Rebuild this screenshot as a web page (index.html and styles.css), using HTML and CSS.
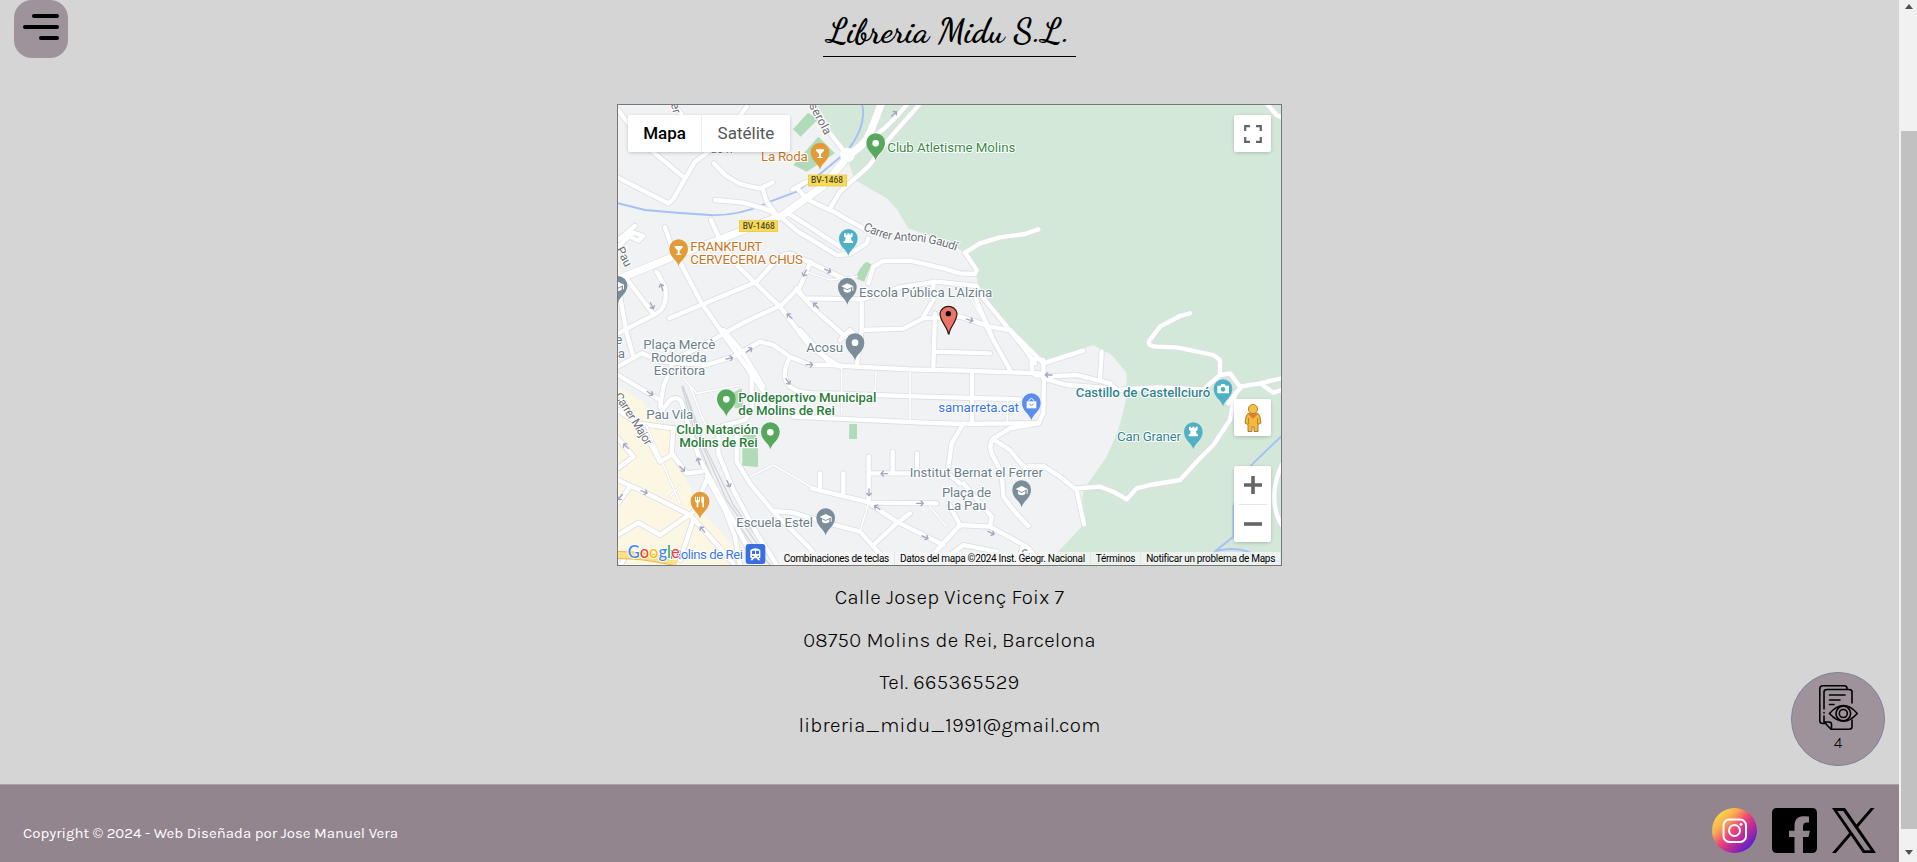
FILE: index.html
```
<!DOCTYPE html>
<html lang="es">
<head>
<meta charset="utf-8">
<title>Libreria Midu S.L.</title>
<link rel="stylesheet" href="styles.css">
</head>
<body>
<div class="viewport">
<div class="page">
  <header class="header">
    <button class="menu" aria-label="Menú"><span class="bar bar-a"></span><span class="bar bar-b"></span><span class="bar bar-c"></span></button>
    <h1 class="brand"><span>Libreria Midu S.L.</span></h1>
  </header>
  <main class="main">
    <section class="map">
      <svg class="map-art" viewBox="24 15 1989 1380" width="663" height="460">
        <defs>
          <path id="pin" d="M0 41C-4 22-28 14-28-12a28 28 0 0 1 56 0C28 14 4 22 0 41Z"/>
          <g id="cap" fill="#fff"><path d="M-18-14 0-23 18-14 0-5Z"/><path d="M-11-8V1Q0 9 11 1V-8L0-2Z"/><path d="M15-14h3V0h-3z"/></g>
          <path id="glass" fill="#fff" d="M-12-25H12V-21L3-11V-2H8V1H-8V-2H-3V-11L-12-21Z"/>
          <path id="tower" fill="#fff" d="M-13-27h6v4h4v-4h6v4h4v-4h6v10l-5 3 2 10h4v6h-28v-6h4l2-10-5-3Z"/>
          <path id="arrow" d="M-11 0H9M2-7 9 0 2 7"/>
          <g id="wide">
            <path d="M24 538 190 470 330 418 515 347 640 258 705 180"/>
            <path d="M705 170Q765 140 782 95L818 0"/>
          </g>
          <g id="mid">
            <path d="M658 328 690 275 775 200 830 125 940 0"/>
            <path d="M760 130Q830 90 890 15"/>
            <path d="M600 0 640 75 700 150"/>
            <path d="M590 298 680 340 760 385M560 262 590 298M548 268 590 245"/>
            <path d="M24 30 110 140 225 235M205 30 250 100 290 150 M24 233 175 310 188 300 255 185 330 130 410 20"/>
            <path d="M312 190 345 225 390 252 450 266 488 247M458 266 470 305 500 345"/>
            <path d="M315 300 400 308 470 328 512 350 560 392 680 465 720 462 770 430 775 415"/>
            <path d="M535 340 590 375 690 440"/>
            <path d="M165 382 185 440 275 610 380 760 500 930"/>
            <path d="M303 360 330 420 385 500 510 620 600 740 690 800"/>
            <path d="M24 420 75 378M24 440 70 398 100 408 85 422 60 410"/>
            <path d="M45 530 132 645M24 555 50 700 70 770"/>
            <path d="M140 515 165 560Q175 620 140 640L24 700"/>
            <path d="M178 655 440 545 510 468Q540 455 560 468L720 545"/>
            <path d="M602 485 570 560 515 615 400 668 290 730 200 775 150 780"/>
            <path d="M560 565 585 595 755 598 870 562 980 545 1100 558 1125 600 1235 735 1275 790"/>
            <path d="M560 570 610 625 740 740"/>
            <path d="M775 550 790 500 820 483 900 482 1000 505 1050 520 1095 522 1100 510 1065 458 1110 430 1170 412 1245 402 1285 388"/>
            <path d="M755 600 755 690M740 800 755 690 880 686 940 655 1050 650 1140 680 1195 690"/>
            <path d="M975 640 970 800M975 755 1140 760M970 545 970 600 940 650"/>
            <path d="M1125 670 1150 720 1200 810M1095 590 1150 720"/>
            <path d="M24 800 95 760 155 785 290 795 370 770 450 725 490 735 540 770 600 795 660 795 740 800 900 808 1060 812 1290 820 1302 835 1300 940 1285 970 1200 970 1060 972 940 968 550 950"/>
            <path d="M340 690 400 760 460 860M425 800 425 930 405 960 310 985"/>
            <path d="M538 775Q510 830 540 860 570 885 650 880L940 890 1230 898M1086 812 1086 970"/>
            <path d="M665 795 570 690M690 720 720 690 740 710"/>
            <path d="M150 920 160 860 195 770M24 825 150 900 155 925"/>
            <path d="M24 930 80 970 190 985M150 940 180 900Q215 880 220 930L270 1080 380 1280 440 1395"/>
            <path d="M190 985 185 1060 230 1120 275 1115M185 1065 150 1085 100 990"/>
            <path d="M380 985V1085L420 1150 490 1235 600 1345 640 1395M325 985V1060L370 1170 440 1300 500 1395"/>
            <path d="M24 1140 110 1180 240 1245 300 1310 370 1390M24 1210 60 1160M24 1015 70 1070 24 1105"/>
            <path d="M24 1305 85 1268 150 1305 250 1235 290 1140M250 1260 210 1380"/>
            <path d="M290 1130 345 1230 375 1310 390 1395"/>
            <path d="M490 1233 550 1238 620 1260 750 1295 840 1395M790 1335 860 1270 900 1240M605 1165 780 1208 980 1210M630 1170V1120M700 1185V1120M776 1205V1070M848 1120V1055M921 1120V1060M780 1120H900"/>
            <path d="M785 1215 860 1265 1000 1335M940 1395 1050 1275 1140 1280 1250 1340 1300 1395M1060 970 1025 1030 1012 1120 1050 1150M1015 1210 1050 1275M1145 1250 1140 1280M1060 1150 1145 1250M980 1395 1060 1335 1160 1355M1240 1335 1220 1395"/>
            <path d="M1285 970 1200 985 1150 1015Q1130 1040 1155 1080L1175 1120 1180 1190 1210 1230 1255 1278M1150 1018 1200 1050 1240 1100 1300 1098 1350 1130 1400 1170 1422 1273M1400 1165 1470 1160 1510 1175 1550 1198 1580 1165 1620 1155 1710 1140 1770 1075 1810 1035 1860 960 1875 880"/>
            <path d="M1740 640 1710 648 1650 680 1618 722Q1610 738 1640 740L1700 742 1810 765 1830 780 1830 825 1780 868 1640 862 1520 870 1500 850 1400 825 1300 830M1300 790 1420 752M1475 755 1470 840M1300 835 1370 855 1510 865M1830 825 1860 820 1890 860 1950 850 2015 835M1890 865 1855 910M1950 850 1990 878 2015 870"/>
            <path d="M1965 5 2000 45 2020 55M2015 1095Q1970 1200 2015 1275M1200 690 1300 790M1300 780Q1260 770 1265 800 1270 840 1300 820Z"/>
            <path d="M30 1400 50 1360"/>
          </g>
          <g id="thin">
            <path d="M590 515 660 540 740 530M610 490 720 540"/>
            <path d="M695 805V940M798 815 795 880M900 818V960M1192 895V970"/>
            <path d="M220 835 260 880 395 855M240 860 280 960 310 1010M420 1130 490 1095 610 1165M775 1210 750 1295M110 980 210 1210M180 1190 210 1160M960 1220 1010 1280M1120 660 1080 590"/>
          </g>
        </defs>
        <rect x="24" y="15" width="1989" height="1380" fill="#f1f2f4"/>
        <path fill="#d3e8d8" d="M620 15 665 90 702 150 735 240 830 295 862 330 895 385 1010 425 1065 458 1100 530 1110 580 1215 710 1265 785 1300 780 1450 735 1505 765 1550 818 1548 900 1525 990 1490 1070 1435 1150 1418 1180 1415 1280 1335 1365 1300 1395H2013V15Z"/>
        <path fill="#fcf7e3" d="M24 860 100 905 130 950 180 990 185 1065 240 1160 275 1240 330 1290 370 1340 395 1395H24ZM24 490 38 530 24 538Z"/>
        <path fill="#b1dab8" d="m549 88 45-50 30 20-52 52ZM550 195l75-85 50 50-85 55ZM737 535q8-30 32-50l18 10q-15 20-24 50ZM365 880l30-15 5 60-25 0ZM397 1045h47v56l-47-4ZM398 1005h40v20h-40ZM718 972h23v45h-24Z"/>
        <path class="river" d="M24 310 105 330 200 338 310 346Q400 345 480 305L560 275 630 222 710 155Q770 80 757 15M2013 1010 1950 1070 1900 1120 1870 1220 1870 1310 1820 1350 1780 1395M1820 1352Q1900 1335 1950 1375L2013 1385"/>
        <path class="rail" d="M220 860 270 1020 350 1200 440 1330 500 1395M216 860 260 1020 340 1210 425 1330 480 1395M228 880 285 1040 370 1215 460 1340 520 1410"/>
        <g class="case"><use href="#wide" class="w22"/><use href="#mid" class="w15"/><use href="#thin" class="w8"/></g>
        <g class="road"><use href="#thin" class="w5"/><use href="#mid" class="w12"/><use href="#wide" class="w19"/></g>
        <circle cx="712" cy="165" r="22" fill="#fff"/>
        <path d="M24 1365Q110 1365 200 1388" fill="none" stroke="#efb83e" stroke-width="24"/>
        <path d="M24 1365Q110 1365 200 1388" fill="none" stroke="#fbe08a" stroke-width="18"/>
        <g class="arrows">
          <use href="#arrow" transform="translate(853 41) rotate(-42)"/><use href="#arrow" transform="translate(584 520) rotate(115)"/><use href="#arrow" transform="translate(654 512) rotate(25)"/><use href="#arrow" transform="translate(617 616) rotate(-135)"/><use href="#arrow" transform="translate(538 648) rotate(-135)"/><use href="#arrow" transform="translate(155 561) rotate(-110)"/><use href="#arrow" transform="translate(126 618) rotate(65)"/><use href="#arrow" transform="translate(1080 660) rotate(15)"/><use href="#arrow" transform="translate(418 750) rotate(-35)"/><use href="#arrow" transform="translate(359 775) rotate(-10)"/><use href="#arrow" transform="translate(599 794)"/><use href="#arrow" transform="translate(534 845) rotate(55)"/><use href="#arrow" transform="translate(121 880) rotate(30)"/><use href="#arrow" transform="translate(47 1038) rotate(-135)"/><use href="#arrow" transform="translate(217 1107) rotate(45)"/><use href="#arrow" transform="translate(266 1083) rotate(-105)"/><use href="#arrow" transform="translate(356 1152) rotate(65)"/><use href="#arrow" transform="translate(103 1176) rotate(20)"/><use href="#arrow" transform="translate(30 1192) rotate(130)"/><use href="#arrow" transform="translate(277 1288) rotate(-130)"/><use href="#arrow" transform="translate(822 1121) rotate(180)"/><use href="#arrow" transform="translate(777 1178) rotate(90)"/><use href="#arrow" transform="translate(931 1210)"/><use href="#arrow" transform="translate(801 1222) rotate(-145)"/><use href="#arrow" transform="translate(946 1312) rotate(25)"/><use href="#arrow" transform="translate(1144 1299) rotate(25)"/><use href="#arrow" transform="translate(1315 825) rotate(180)"/>
        </g>
        <g class="street">
          <path id="gaudi" fill="none" d="M758 388Q830 427 895 422 975 427 1050 457"/>
          <path id="major" fill="none" d="M12 888Q60 960 112 1046"/>
          <text textLength="290"><textPath href="#gaudi">Carrer Antoni Gaudí</textPath></text>
          <text textLength="178"><textPath href="#major">Carrer Major</textPath></text>
          <text transform="translate(592 8) rotate(62)" textLength="112">iserola</text>
          <text transform="translate(182 12) rotate(75)">er</text>
          <text transform="translate(18 448) rotate(63)">Pau</text>
          <text x="300" y="160">de n</text>
          <text transform="translate(1245 1378) rotate(-35)">C</text>
        </g>
        <g class="shield"><rect x="595" y="225" width="115" height="33"/><rect x="388" y="362" width="115" height="33"/><text x="603" y="250" textLength="96">BV-1468</text><text x="398" y="387" textLength="96">BV-1468</text></g>
        <g class="poi" transform="translate(-1 -1)">
          <g fill="#c9761f"><text x="454" y="185" textLength="140">La Roda</text><text x="242" y="455" textLength="216">FRANKFURT</text><text x="242" y="494" textLength="338">CERVECERIA CHUS</text></g>
          <g fill="#3a8a49"><text x="833" y="157" textLength="384">Club Atletisme Molins</text></g>
          <g fill="#2c7d3b" class="strong"><text x="386" y="906" textLength="414">Polideportivo Municipal</text><text x="386" y="945" textLength="290">de Molins de Rei</text><text x="200" y="1004" textLength="246">Club Natación</text><text x="209" y="1043" textLength="235">Molins de Rei</text></g>
          <g fill="#6c7f8b"><text x="748" y="591" textLength="400">Escola Pública L'Alzina</text><text x="590" y="756" textLength="110">Acosu</text><text x="101" y="748" textLength="216">Plaça Mercè</text><text x="124" y="787" textLength="167">Rodoreda</text><text x="132" y="826" textLength="155">Escritora</text><text x="110" y="958" textLength="141">Pau Vila</text><text x="380" y="1281" textLength="230">Escuela Estel</text><text x="900" y="1131" textLength="400">Institut Bernat el Ferrer</text><text x="997" y="1191" textLength="147">Plaça de</text><text x="1012" y="1230" textLength="118">La Pau</text><text x="17" y="734">e</text><text x="24" y="774">a</text></g>
          <g fill="#3b76e8"><text x="986" y="936" textLength="242">samarreta.cat</text><text x="180" y="1377" textLength="220">Molins de Rei</text></g>
          <g fill="#31848f"><text x="1398" y="893" textLength="404" class="strong">Castillo de Castellciuró</text><text x="1522" y="1023" textLength="192">Can Graner</text></g>
        </g>
        <g class="pins">
          <g fill="#e39b38"><use href="#pin" x="630" y="168"/><use href="#pin" x="206" y="458"/><use href="#pin" x="270" y="1215"/></g>
          <g fill="#57a75c"><use href="#pin" x="797" y="140"/><use href="#pin" x="349" y="908"/><use href="#pin" x="481" y="1007"/></g>
          <g fill="#4fb0c6"><use href="#pin" x="715" y="427"/><use href="#pin" x="1750" y="1007"/><use href="#pin" x="1839" y="878"/></g>
          <g fill="#7a8d99"><use href="#pin" x="712" y="573"/><use href="#pin" x="24" y="568"/><use href="#pin" x="735" y="740"/><use href="#pin" x="647" y="1265"/><use href="#pin" x="1235" y="1181"/></g>
          <use href="#pin" x="1264" y="920" fill="#5b8def"/>
          <use href="#glass" x="630" y="173"/><use href="#glass" x="206" y="463"/>
          <use href="#tower" x="715" y="427"/><use href="#tower" x="1750" y="1007"/>
          <use href="#cap" x="712" y="573"/><use href="#cap" x="24" y="568"/><use href="#cap" x="647" y="1265"/><use href="#cap" x="1235" y="1181"/>
          <g fill="#fff"><circle cx="797" cy="130" r="10"/><circle cx="349" cy="898" r="10"/><circle cx="481" cy="997" r="10"/><circle cx="735" cy="728" r="10"/>
          <path d="M1822 857h9l4-5h8l4 5h10v23h-35Z"/><path d="M1250 904h29v21h-29Z"/><path d="M255 1190h3v10h3v-10h3v10h3v-10h3v12q0 5-5 6v14h-5v-14q-5-1-5-6ZM274 1190h8v32h-5v-14h-3Z"/></g>
          <circle cx="1839" cy="868" r="7" fill="#4fb0c6"/>
          <path d="M1257 904v-3q7-11 14 0v3" fill="none" stroke="#fff" stroke-width="3"/><path d="M1258 911q6 10 13 0" fill="none" stroke="#5b8def" stroke-width="3"/>
          <rect x="407" y="1332" width="59" height="60" rx="9" fill="#3b6fe0"/><path d="M421 1350q15-10 30 0v24h-5l5 7h-7l-4-6h-8l-4 6h-7l5-7h-5Z" fill="#fff"/><path d="M426 1352h9v10h-9Zm12 0h9v10h-9ZM426 1367h5v4h-5Zm16 0h5v4h-5Z" fill="#3b6fe0"/>
        </g>
        <path d="M1015 702C1013 680 990 666 990 640A26 26 0 0 1 1041 640C1041 666 1019 680 1017 702Z" fill="#ea7467" stroke="#2b1512" stroke-width="3.5"/><circle cx="1015" cy="641" r="8"/>
        <g class="google"><text x="53" y="1374" textLength="156" lengthAdjust="spacingAndGlyphs"><tspan fill="#4285f4">G</tspan><tspan fill="#ea4335">o</tspan><tspan fill="#fbbc04">o</tspan><tspan fill="#4285f4">g</tspan><tspan fill="#34a853">l</tspan><tspan fill="#ea4335">e</tspan></text></g>
      </svg>
      <div class="types"><button class="type active">Mapa</button><button class="type">Satélite</button></div>
      <button class="ctl full" aria-label="Pantalla completa"><svg width="18" height="18" viewBox="0 0 18 18"><path d="M1.2 6V1.2H6M12 1.2h4.8V6M16.800 12v4.800H12M6 16.800H1.200V12" fill="none" stroke="#666" stroke-width="2.200"/></svg></button>
      <button class="ctl pegman" aria-label="Street View"><svg width="18" height="30" viewBox="0 0 18 30"><path d="M5 10h8q2.500 1 3 4l1 6-3 1.500V28.500H10V24H8v4.500H4V21.500L1 20l1-6q.5-3 3-4Z" fill="#f5b83d" stroke="#9b742c" stroke-width=".9"/><path d="m4 11 5 5 5-5Z" fill="#e07f35"/><circle cx="9" cy="6" r="4.600" fill="#f9bf42" stroke="#ad8335"/><path d="M4.500 15v6m9-6v6" stroke="#b8872e" fill="none"/></svg></button>
      <div class="zoom"><button class="zbtn" aria-label="Acercar"><svg width="18" height="18"><path d="M9 0v18M0 9h18" stroke="#666" stroke-width="3.600"/></svg></button><i class="zline"></i><button class="zbtn" aria-label="Alejar"><svg width="18" height="18"><path d="M0 10h18" stroke="#666" stroke-width="3.600"/></svg></button></div>
      <div class="legal"><span>Combinaciones de teclas</span><span>Datos del mapa ©2024 Inst. Geogr. Nacional</span><span>Términos</span><span>Notificar un problema de Maps</span></div>
    </section>
    <address class="contact"><p>Calle Josep Vicenç Foix 7</p><p>08750 Molins de Rei, Barcelona</p><p>Tel. 665365529</p><p>libreria_midu_1991@gmail.com</p></address>
  </main>
  <footer class="footer">
    <p class="copy">Copyright © 2024 - Web Diseñada por Jose Manuel Vera</p>
    <div class="social">
      <svg width="45" height="45" viewBox="0 0 45 45"><defs><linearGradient id="ig" x1="0.100" y1="0.100" x2="0.900" y2="0.900"><stop offset="0" stop-color="#f9e04b"/><stop offset=".25" stop-color="#f9ae50"/><stop offset=".48" stop-color="#ee4676"/><stop offset=".7" stop-color="#b62a9c"/><stop offset=".95" stop-color="#5a1fce"/></linearGradient></defs><circle cx="22.500" cy="22.500" r="22.500" fill="url(#ig)"/><rect x="11.500" y="11.500" width="22.500" height="22.500" rx="6" fill="none" stroke="#fff" stroke-width="2"/><circle cx="22.500" cy="22.500" r="5.500" fill="none" stroke="#fff" stroke-width="2"/><circle cx="29" cy="16.300" r="1.500" fill="#fff"/></svg>
      <svg width="45" height="45" viewBox="0 0 45 45"><path d="M5 0H40Q45 0 45 5V40Q45 45 40 45H31V29H36.500L38 22.700H31V18.500Q31 14.500 35 14.500H37V8.500Q34 8 31 8.200C25 8.500 22.500 12 22.500 18V22.700H17V29H22.500V45H5Q0 45 0 40V5Q0 0 5 0Z"/></svg>
      <svg width="44" height="45" viewBox="0 0 1200 1227" preserveAspectRatio="none"><path d="M714.163 519.284 1160.890 0h-105.860L667.137 450.887 357.328 0H0l468.492 681.821L0 1226.370h105.866l409.625-476.152 327.181 476.152H1200L714.137 519.284h.026ZM569.165 687.828l-47.468-67.894-377.686-540.240h162.604l304.797 435.991 47.468 67.894 396.200 566.721H892.476L569.165 687.854v-.026Z"/></svg>
    </div>
  </footer>
  <a class="visits"><svg width="39" height="45" viewBox="0 0 39 45" fill="none" stroke="#000" stroke-width="1.600" stroke-linecap="round" stroke-linejoin="round"><path d="M28 3.500Q28 .8 25.500.8H4Q.8.800.800 4V36Q.800 38.500 4 38.500H7M5 24V7Q5 4.500 8 4.500H30Q33 4.500 33 7V18M5 27.500v.5M5 31v6l7 7.200H30q3 0 3-2.500V35M5.500 37H10q2.500 0 2.500 2.500V44M10.500 10H26M10.500 15H21M10.500 19.500H15"/><path d="M10.500 28.500Q24.500 12.500 38.300 28.500 24.500 44 10.500 28.500Z"/><circle cx="24.300" cy="28.500" r="7.300"/><circle cx="24.300" cy="28.500" r="4"/></svg><span>4</span></a>
</div>
<div class="scrollbar"><i class="up"></i><i class="thumb"></i><i class="down"></i></div>
</div>
</body>
</html>
```
FILE: styles.css
```
* { box-sizing: border-box; margin: 0; }
body { background: #d5d5d5; font-family: Karla, Roboto, sans-serif; color: #000; overflow: hidden; }
button { border: 0; padding: 0; background: none; font: inherit; }
svg { display: block; }
.viewport { display: grid; grid-template-columns: 1899px 18px; height: 862px; }
.page { position: relative; display: grid; grid-template-rows: 104px 680px 78px; }
.header { display: flex; justify-content: center; }
.menu { position: absolute; left: 14px; top: 0; width: 54px; height: 58px; border-radius: 18px; background: #9f939b; display: flex; flex-direction: column; align-items: flex-end; gap: 7px; padding: 14px 9px 0 0; }
.bar { height: 4px; border-radius: 2px; background: #000; }
.bar-a { width: 27px; }
.bar-b { width: 36px; }
.bar-c { width: 20px; }
.brand { width: 253px; height: 57px; border-bottom: 1px solid #000; padding: 12px 0 0 4px; font: 700 34px/40px "Dancing Script", "Liberation Serif", cursive; white-space: nowrap; }
.main { display: flex; flex-direction: column; align-items: center; }
.map { position: relative; width: 665px; height: 462px; border: 1px solid #777; overflow: hidden; font-family: Roboto, sans-serif; }
.map-art { font-family: Roboto, sans-serif; }
.case, .road, .river, .rail, .arrows { fill: none; stroke-linecap: round; stroke-linejoin: round; }
.case { stroke: #dcdfe5; }
.road { stroke: #fff; }
.w22 { stroke-width: 26px; }
.w19 { stroke-width: 22px; }
.w15 { stroke-width: 18px; }
.w12 { stroke-width: 13px; }
.w8 { stroke-width: 8px; }
.w5 { stroke-width: 5px; }
.river { stroke: #a5c1f7; stroke-width: 6px; }
.rail { stroke: #d1d4d9; stroke-width: 4px; }
.arrows { stroke: #a2a6c2; stroke-width: 4px; }
.street { font-size: 36px; fill: #6b6e73; }
.street text, .poi text { stroke: #fff; stroke-width: 6px; stroke-linejoin: round; paint-order: stroke; }
.poi { font-size: 40px; }
.strong { font-weight: 500; }
.pins use { stroke: none; }
.shield rect { fill: #f6da58; stroke: #e8c53d; stroke-width: 2px; }
.shield text { font-size: 25px; font-weight: 500; fill: #4e4a2b; }
.google text { font: 500 53px Lato, sans-serif; stroke: #fff; stroke-width: 5px; paint-order: stroke; }
.types { position: absolute; left: 10px; top: 10px; height: 37px; display: grid; grid-template-columns: 74px 88px; background: #fff; border-radius: 2px; box-shadow: 0 1px 4px -1px rgba(0,0,0,.3); }
.type { font-size: 17px; color: #565656; padding-bottom: 2px; }
.type.active { color: #000; font-weight: 500; border-right: 1px solid #eee; }
.ctl, .zoom { position: absolute; right: 10px; width: 37px; background: #fff; border-radius: 2px; box-shadow: 0 1px 4px -1px rgba(0,0,0,.3); }
.ctl { height: 37px; display: grid; place-items: center; }
.full { top: 10px; }
.pegman { top: 294px; }
.zoom { top: 361px; height: 76px; display: flex; flex-direction: column; align-items: center; }
.zbtn { height: 38px; display: grid; place-items: center; }
.zline { width: 28px; height: 1px; background: #e6e6e6; }
.legal { position: absolute; right: 0; bottom: 0; height: 13px; display: flex; font-size: 10px; line-height: 13px; letter-spacing: -.3px; white-space: nowrap; color: #000; }
.legal span { background: rgba(245,245,245,.75); padding: 0 5px; border-right: 1px solid #dfe9e2; }
.contact { font-style: normal; font-size: 20.600px; font-weight: 350; letter-spacing: .27px; line-height: 24px; width: 340px; padding-top: 19px; display: grid; grid-auto-rows: 42.7px; text-align: center; white-space: nowrap; }
.footer { background: #93858d; border-top: 1px solid #aaa2a7; display: flex; justify-content: space-between; padding: 23px 23px 0 23px; }
.copy { color: #fff; font-size: 15px; font-weight: 450; line-height: 20px; padding-top: 15px; }
.social { display: flex; gap: 15px; }
.visits { position: absolute; left: 1791px; top: 672px; width: 94px; height: 94px; border: 1px solid #7c819b; border-radius: 50%; background: #9f939b; display: flex; flex-direction: column; align-items: center; padding-top: 12px; gap: 4px; font-size: 16px; font-weight: 300; line-height: 18px; }
.scrollbar { background: #f1f1f1; padding-left: 2px; display: grid; grid-template-rows: 131px 698px 33px; justify-items: center; }
.thumb { width: 16px; background: #c1c1c1; }
.up, .down { width: 0; height: 0; border: 4px solid transparent; }
.up { border-bottom: 5px solid #505050; border-top: 0; margin-top: 4px; }
.down { border-top: 5px solid #505050; border-bottom: 0; margin-top: 21px; }
```
